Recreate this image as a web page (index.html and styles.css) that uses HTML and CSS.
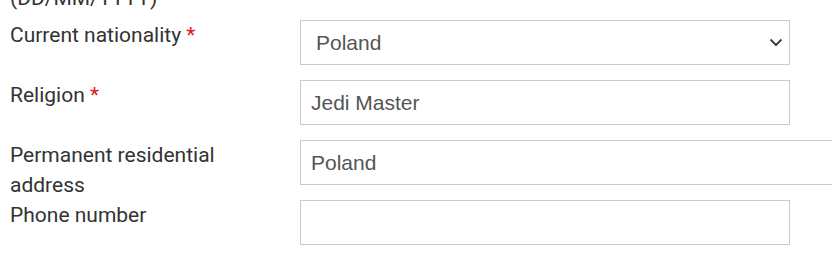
FILE: index.html
```html
<!DOCTYPE html>
<html lang="en">
<head>
    <meta charset="UTF-8">
    <meta name="viewport" content="width=device-width, initial-scale=1.0">
    <title>Applicant details</title>
    <link rel="stylesheet" href="styles.css">
</head>
<body>
    <form class="details-form">
        <div class="form-row form-row-clipped">
            <label class="form-label" for="dob">Date of birth<br>(DD/MM/YYYY)</label>
        </div>
        <div class="form-row">
            <label class="form-label" for="nationality">Current nationality <span class="required">*</span></label>
            <div class="select-wrap">
                <select id="nationality" class="form-control form-select">
                    <option>Poland</option>
                    <option>Germany</option>
                    <option>Czech Republic</option>
                </select>
                <svg class="select-arrow" width="14" height="9" viewBox="0 0 14 9">
                    <path d="M1.5 1.5 L7 7 L12.5 1.5" fill="none" stroke="#444" stroke-width="2"/>
                </svg>
            </div>
        </div>
        <div class="form-row">
            <label class="form-label" for="religion">Religion <span class="required">*</span></label>
            <input type="text" id="religion" class="form-control" value="Jedi Master">
        </div>
        <div class="form-row">
            <label class="form-label" for="address">Permanent residential address</label>
            <input type="text" id="address" class="form-control form-control-wide" value="Poland">
        </div>
        <div class="form-row">
            <label class="form-label" for="phone">Phone number</label>
            <input type="tel" id="phone" class="form-control" value="">
        </div>
    </form>
</body>
</html>
```

FILE: styles.css
```css
body {
    margin: 0;
    font-family: Roboto, "Liberation Sans", Arial, sans-serif;
    color: #333;
    background: #fff;
    overflow: hidden;
}
.details-form {
    padding-left: 10px;
}
.form-row {
    display: flex;
    align-items: flex-start;
}
.form-label {
    width: 250px;
    margin-right: 40px;
    flex-shrink: 0;
    font-size: 21px;
    line-height: 30px;
}
.form-row-clipped .form-label {
    margin-top: -47px;
    margin-bottom: 7px;
}
.form-label .required {
    color: #e4141b;
}
.form-control {
    box-sizing: border-box;
    flex-shrink: 0;
    width: 490px;
    height: 45px;
    margin: 0 0 15px 0;
    padding: 0 10px;
    font-family: "Liberation Sans", Arial, sans-serif;
    font-size: 21px;
    color: #555;
    background: #fff;
    border: 1px solid #ccc;
    border-radius: 0;
    outline: none;
}
.form-control-wide {
    width: 600px;
}
.select-wrap {
    position: relative;
}
.form-select {
    appearance: none;
    -webkit-appearance: none;
    padding-left: 15px;
}
.select-arrow {
    position: absolute;
    left: 469px;
    top: 18px;
    pointer-events: none;
}
```
